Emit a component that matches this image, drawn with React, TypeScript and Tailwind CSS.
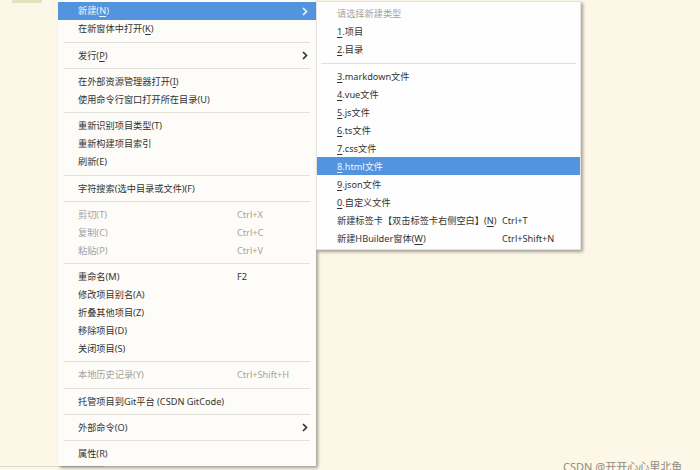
import React from 'react'

type Item =
  | { sep: true }
  | {
      sep?: false
      label: React.ReactNode
      shortcut?: string
      arrow?: boolean
      disabled?: boolean
      active?: boolean
    }

const u = (c: string) => <span className="underline underline-offset-2">{c}</span>

const mainItems: Item[] = [
  { label: <>新建({u('N')})</>, arrow: true, active: true },
  { label: <>在新窗体中打开({u('K')})</> },
  { sep: true },
  { label: <>发行({u('P')})</>, arrow: true },
  { sep: true },
  { label: <>在外部资源管理器打开({u('I')})</> },
  { label: '使用命令行窗口打开所在目录(U)' },
  { sep: true },
  { label: '重新识别项目类型(T)' },
  { label: '重新构建项目索引' },
  { label: '刷新(E)' },
  { sep: true },
  { label: '字符搜索(选中目录或文件)(F)' },
  { sep: true },
  { label: '剪切(T)', shortcut: 'Ctrl+X', disabled: true },
  { label: '复制(C)', shortcut: 'Ctrl+C', disabled: true },
  { label: '粘贴(P)', shortcut: 'Ctrl+V', disabled: true },
  { sep: true },
  { label: '重命名(M)', shortcut: 'F2' },
  { label: '修改项目别名(A)' },
  { label: '折叠其他项目(Z)' },
  { label: '移除项目(D)' },
  { label: '关闭项目(S)' },
  { sep: true },
  { label: '本地历史记录(Y)', shortcut: 'Ctrl+Shift+H', disabled: true },
  { sep: true },
  { label: '托管项目到Git平台 (CSDN GitCode)' },
  { sep: true },
  { label: '外部命令(O)', arrow: true },
  { sep: true },
  { label: '属性(R)' },
]

const subItems: Item[] = [
  { label: '请选择新建类型', disabled: true },
  { label: <>{u('1')}.项目</> },
  { label: <>{u('2')}.目录</> },
  { sep: true },
  { label: <>{u('3')}.markdown文件</> },
  { label: <>{u('4')}.vue文件</> },
  { label: <>{u('5')}.js文件</> },
  { label: <>{u('6')}.ts文件</> },
  { label: <>{u('7')}.css文件</> },
  { label: <>{u('8')}.html文件</>, active: true },
  { label: <>{u('9')}.json文件</> },
  { label: <>{u('0')}.自定义文件</> },
  { label: <>新建标签卡【双击标签卡右侧空白】({u('N')})</>, shortcut: 'Ctrl+T' },
  { label: <>新建HBuilder窗体({u('W')})</>, shortcut: 'Ctrl+Shift+N' },
]

function Chevron() {
  return (
    <svg width="6" height="9" viewBox="0 0 6 9" fill="none">
      <path d="M1 1l3.5 3.5L1 8" stroke="currentColor" strokeWidth="1.7" />
    </svg>
  )
}

function Menu({ items, labelW, sepInset }: { items: Item[]; labelW: string; sepInset: string }) {
  return (
    <>
      {items.map((it, i) =>
        it.sep ? (
          <div key={i} className={`h-[8.3px] flex items-center ${sepInset}`}>
            <div className="h-px w-full bg-[#e2e0da]" />
          </div>
        ) : (
          <div
            key={i}
            className={`h-[18px] flex items-center pl-[20px] pr-[8px] whitespace-nowrap ${
              it.active ? 'bg-[#5295de] text-[#eef4fb]' : it.disabled ? 'text-[#a3a29f]' : 'text-[#333333]'
            }`}
          >
            <div className={labelW}>{it.label}</div>
            <div className="flex-1">{it.shortcut}</div>
            {it.arrow && (
              <div className={it.active ? 'text-[#eef4fb]' : 'text-[#333]'}>
                <Chevron />
              </div>
            )}
          </div>
        )
      )}
    </>
  )
}

export default function App() {
  return (
    <div className="relative w-[700px] h-[470px] overflow-hidden bg-[#fcf7e7] text-[9.2px] leading-none font-['Noto_Sans','Noto_Sans_CJK_SC',sans-serif]">
      {/* file tree remnant */}
      <div className="absolute left-[12px] top-0 w-[30px] h-[3px] bg-[#e3e4bf]" />
      <div className="absolute left-0 top-[466px] w-[104px] h-px bg-[#dcd8cc]" />

      <div className="absolute left-[58px] top-0 w-[258px] h-[466px] pt-[2px] bg-[#fdfcf8] shadow-[2px_2px_3px_rgba(0,0,0,0.35)]">
        <Menu items={mainItems} labelW="w-[159px]" sepInset="px-[6px]" />
      </div>

      <div className="absolute left-[316px] top-[1px] w-[265px] h-[249px] pt-[3px] bg-[#fefefe] border border-[#e4e2dc] shadow-[2px_2px_3px_rgba(0,0,0,0.35)]">
        <Menu items={subItems} labelW="w-[165px]" sepInset="px-[4px]" />
      </div>

      <div className="absolute left-[563px] top-[461px] text-[11px] text-[#8e8c86] whitespace-nowrap">
        CSDN @开开心心里北鱼
      </div>
    </div>
  )
}
